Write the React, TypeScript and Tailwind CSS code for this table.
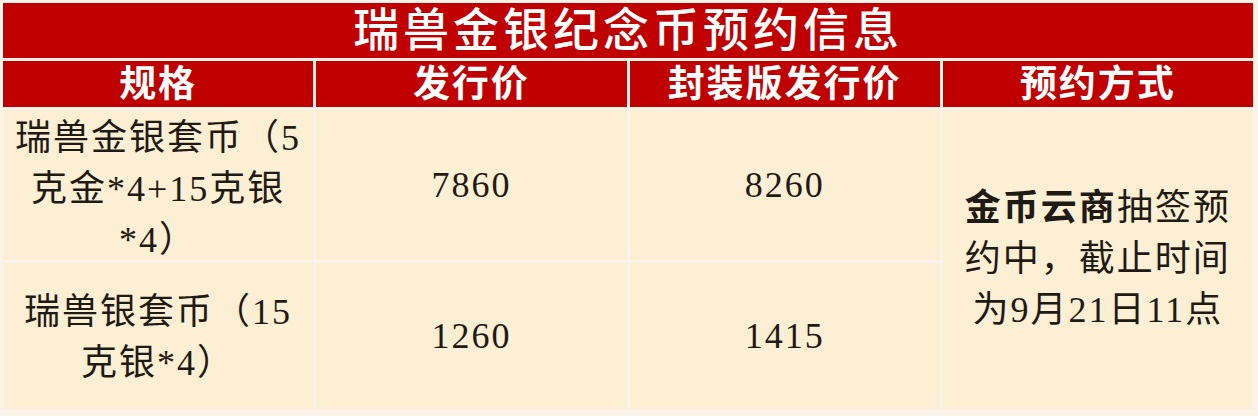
import React from "react";

const font = { fontFamily: '"Liberation Serif", "Noto Sans CJK SC", serif' };

export default function App() {
  const head = "bg-[#c00000] text-white flex items-center justify-center text-[37px] font-bold tracking-[2px] leading-none";
  const cell = "bg-[#fcefd3] text-[#1e1a14] flex items-center justify-center text-center text-[36px] leading-[51px] tracking-[2px]";
  return (
    <div className="w-[1258px] h-[416px] bg-[#fbf3ea] p-[3px] pr-[5px] pb-[4px]" style={font}>
      <div className="grid grid-cols-4 grid-rows-[55px_46px_150px_146px] gap-[3px] h-full">
        <div className="col-span-4 bg-[#c00000] text-white flex items-center justify-center text-[46px] font-medium tracking-[4px] leading-none">
          瑞兽金银纪念币预约信息
        </div>
        <div className={head}>规格</div>
        <div className={head}>发行价</div>
        <div className={head}>封装版发行价</div>
        <div className={head}>预约方式</div>
        <div className={cell + " px-1 pt-2"}>瑞兽金银套币（5克金*4+15克银*4）</div>
        <div className={cell}>7860</div>
        <div className={cell}>8260</div>
        <div className={cell + " row-span-2 px-[18px]"}>
          <span>
            <b>金币云商</b>抽签预约中，截止时间为9月21日11点
          </span>
        </div>
        <div className={cell + " px-5 pt-1"}>瑞兽银套币（15克银*4）</div>
        <div className={cell}>1260</div>
        <div className={cell}>1415</div>
      </div>
    </div>
  );
}
